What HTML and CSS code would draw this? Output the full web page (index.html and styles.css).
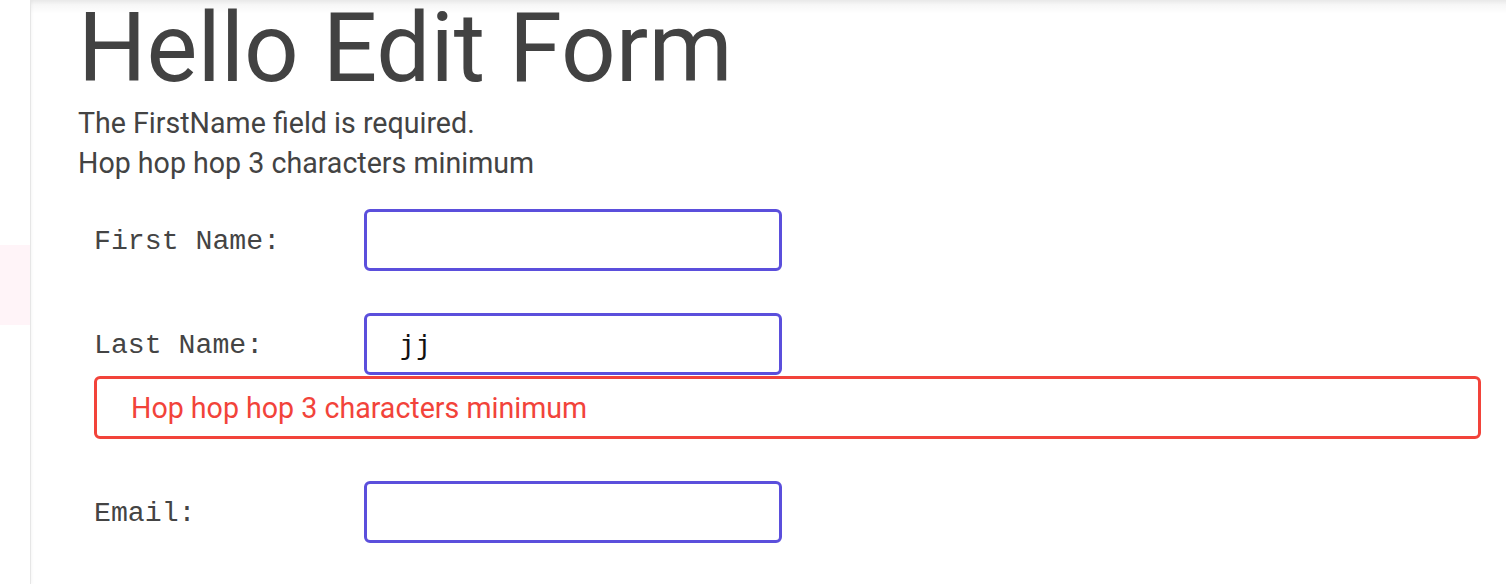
FILE: index.html
```html
<!DOCTYPE html>
<html>
<head>
<meta charset="utf-8">
<title>Hello Edit Form</title>
<link rel="stylesheet" href="styles.css">
</head>
<body>
<div class="app">
  <aside class="sidebar">
    <div class="sidebar-mark"></div>
  </aside>
  <main class="main">
    <h1 class="title">Hello Edit Form</h1>
    <ul class="summary">
      <li>The FirstName field is required.</li>
      <li>Hop hop hop 3 characters minimum</li>
    </ul>
    <form class="form">
      <div class="row">
        <label class="label" for="fn">First Name:</label>
        <input class="field" id="fn" type="text" value="">
      </div>
      <div class="row">
        <label class="label" for="ln">Last Name:</label>
        <input class="field" id="ln" type="text" value="jj">
      </div>
      <div class="error">Hop hop hop 3 characters minimum</div>
      <div class="row">
        <label class="label" for="em">Email:</label>
        <input class="field" id="em" type="text" value="">
      </div>
    </form>
  </main>
</div>
</body>
</html>
```

FILE: styles.css
```css
html, body {
  margin: 0;
  padding: 0;
  background: #ffffff;
}

.app {
  display: flex;
  min-height: 584px;
}

.sidebar {
  width: 30px;
  flex: none;
  border-right: 1px solid #e6e6e6;
  box-shadow: 1px 0 3px rgba(0, 0, 0, 0.04);
  padding-top: 245px;
  box-sizing: content-box;
}

.sidebar-mark {
  height: 80px;
  background: #fff4f8;
}

.main {
  flex: 1;
  padding: 0 25px 0 47px;
  background: linear-gradient(to bottom, rgba(0,0,0,0.09) 0px, rgba(0,0,0,0.03) 5px, rgba(0,0,0,0) 14px) no-repeat;
  font-family: Roboto, "Liberation Sans", sans-serif;
  color: #434343;
}

.title {
  margin: 0;
  font-size: 96px;
  line-height: 1;
  font-weight: 400;
  color: #424242;
}

.summary {
  list-style: none;
  margin: 7px 0 0;
  padding: 0;
  font-size: 28.6px;
  line-height: 40px;
}

.form {
  margin: 26px 0 0 16px;
}

.row {
  display: flex;
  align-items: center;
  margin-top: 42px;
}

.row:first-child {
  margin-top: 0;
}

.error + .row {
  margin-top: 42px;
}

.label {
  width: 270px;
  flex: none;
  font-family: "Liberation Mono", "Courier New", monospace;
  font-size: 28.2px;
  color: #444444;
  padding-top: 2px;
}

.field {
  box-sizing: border-box;
  width: 418px;
  height: 62px;
  margin: 0;
  border: 3px solid #5b4fdc;
  border-radius: 6px;
  padding: 0 0 0 32px;
  font-family: "DejaVu Sans Mono", monospace;
  font-size: 27px;
  color: #111;
  background: #fff;
  outline: none;
}

.error {
  box-sizing: border-box;
  margin-top: 1px;
  height: 63px;
  border: 3px solid #f2433a;
  border-radius: 6px;
  padding: 0 0 0 34px;
  display: flex;
  align-items: center;
  font-size: 28.6px;
  line-height: 40px;
  color: #f2433a;
}
```
